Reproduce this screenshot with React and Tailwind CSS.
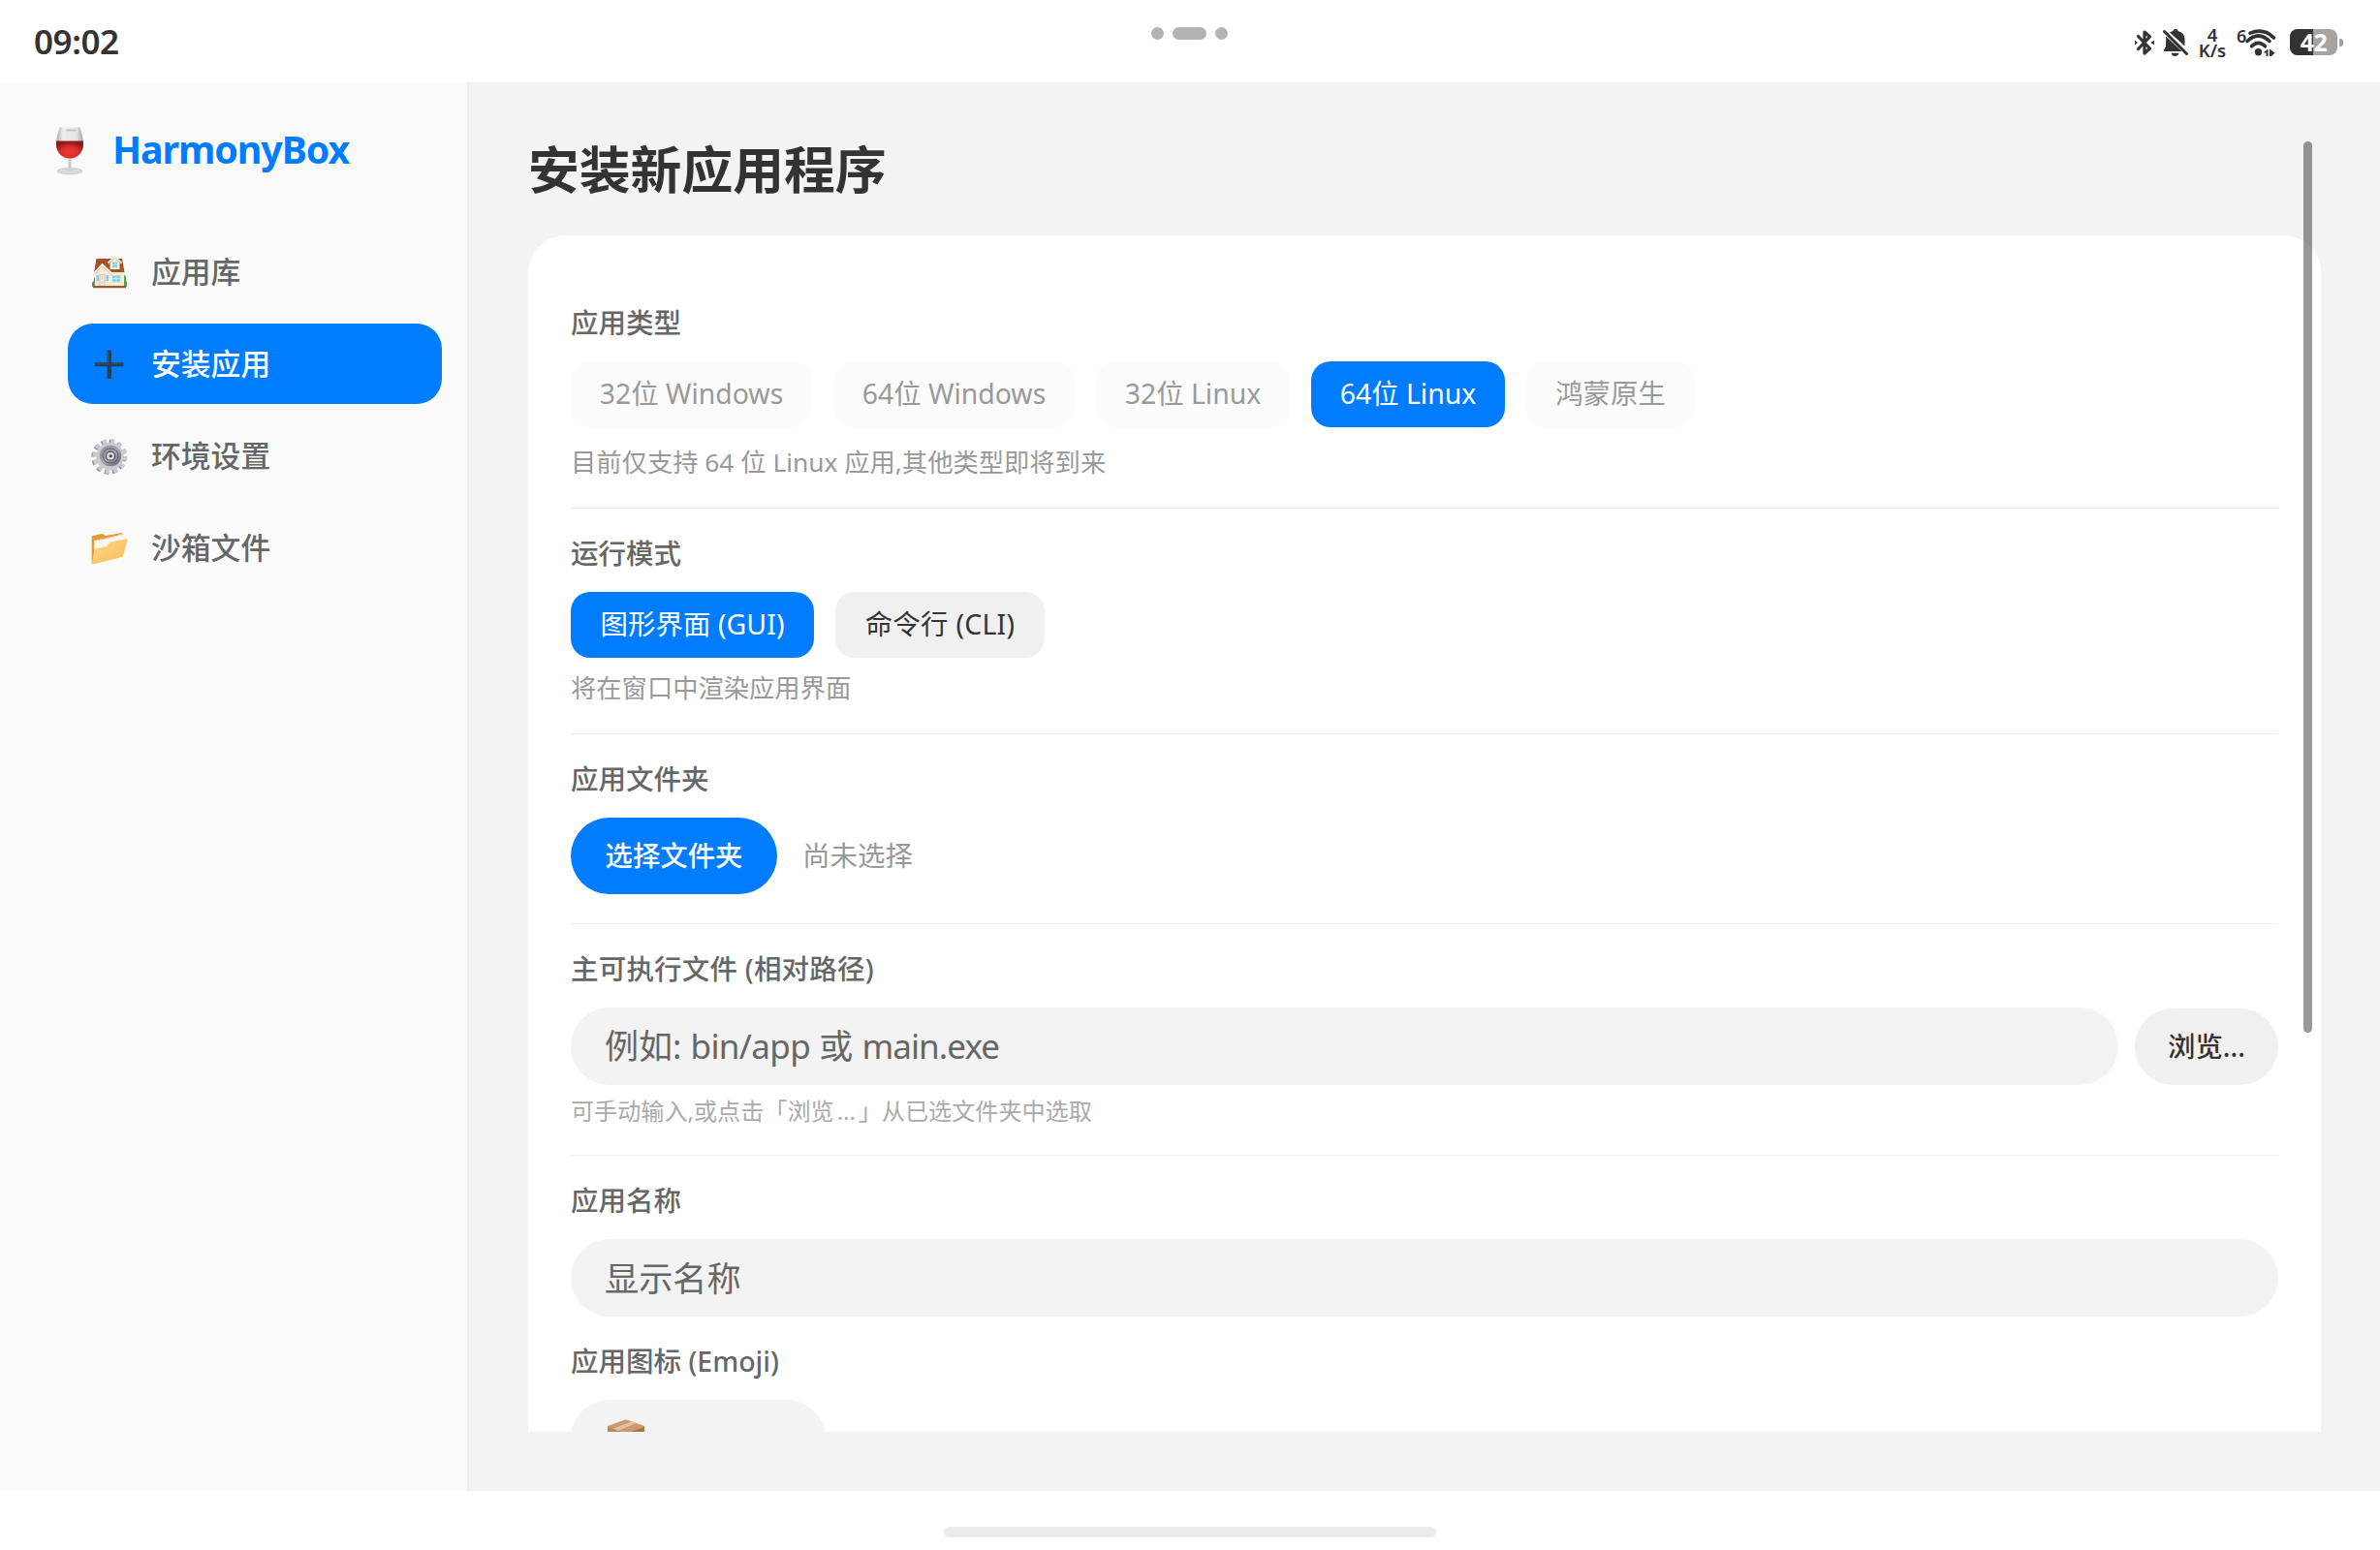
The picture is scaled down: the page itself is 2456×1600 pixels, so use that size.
import React from 'react';

const NAV_ITEMS = [
  { id: 'library', label: '应用库', Icon: HouseIcon },
  { id: 'install', label: '安装应用', Icon: PlusIcon },
  { id: 'env', label: '环境设置', Icon: GearIcon },
  { id: 'sandbox', label: '沙箱文件', Icon: FolderIcon },
];

const APP_TYPES = [
  { label: '32位 Windows', width: 'w-[249px]' },
  { label: '64位 Windows', width: 'w-[249px]' },
  { label: '32位 Linux', width: 'w-[200px]' },
  { label: '64位 Linux', width: 'w-[200px]', active: true },
  { label: '鸿蒙原生', width: 'w-[174px]' },
];

function WineIcon() {
  return (
    <svg width="30" height="50" viewBox="0 0 30 50">
      <defs>
        <linearGradient id="glass" x1="0" x2="1" y1="0" y2="0">
          <stop offset="0" stopColor="#a9a9a9" />
          <stop offset="0.25" stopColor="#ececec" />
          <stop offset="0.75" stopColor="#e4e4e4" />
          <stop offset="1" stopColor="#a2a2a2" />
        </linearGradient>
        <radialGradient id="wine" cx="0.5" cy="0.65" r="0.6">
          <stop offset="0" stopColor="#f23a35" />
          <stop offset="0.5" stopColor="#dc302c" />
          <stop offset="1" stopColor="#8d1a1c" />
        </radialGradient>
      </defs>
      <ellipse cx="15" cy="45.6" rx="13" ry="3" fill="#dcdcdc" stroke="#bdbdbd" strokeWidth="0.7" />
      <path d="M13 32h4l-.6 10.5c0 1 2.2 2 4.6 2.6H9c2.4-.6 4.6-1.6 4.6-2.6z" fill="#cfcfcf" />
      <path d="M4.500.6h21C27.500 6 29 12.500 29 18c0 8.500-6.500 15-14 15S1 26.500 1 18C1 12.500 2.500 6 4.500.6z" fill="url(#glass)" />
      <path d="M1.200 14.500h27.600c.2 1.200.2 2.300.2 3.500 0 8.500-6.500 14.600-14 14.600S1 26.500 1 18c0-1.200 0-2.300.2-3.500z" fill="url(#wine)" />
      <rect x="11" y="2.500" width="11" height="2" rx="1" fill="#c4c4c4" />
    </svg>
  );
}

function HouseIcon() {
  return (
    <svg width="38" height="38" viewBox="0 0 38 38">
      <path d="M1 31c0-2 1-3 2-3-1-3 2-5 4-4v10H1zM37 31c0-2-.5-3-1-3 1-4-1-7-4-7v13h5z" fill="#5d9a4a" />
      <path d="M4 19 11 11l8 5h15v17H4z" fill="#f3ebd0" />
      <path d="M5.500 5H32l2.500 14H19l-7.500-7.500L3 19z" fill="#a3512c" />
      <path d="M3 20.500 11.500 11l9.500 9.500v12.500H4V20z" fill="#f3ebd0" />
      <path d="M2.500 20.500 11.500 11l10 9.500" fill="none" stroke="#fffbee" strokeWidth="1.8" />
      <path d="M2.500 22 11.500 12.600l10 9.400" fill="none" stroke="#b5a684" strokeWidth="0.6" />
      <path d="M19.500 9 24.500 4l5 5v7h-10z" fill="#f6efd8" />
      <path d="M17.500 9.500 24.500 3.200l7 6.300" fill="none" stroke="#f4eedb" strokeWidth="1.9" />
      <path d="M17.500 10.500 24.500 4.500l7 6" fill="none" stroke="#b7a98b" strokeWidth="0.5" />
      <path d="M22 8.500h5V14h-5zM22 22.500h8v6.500h-8zM5.500 22H8v6H5.500zM15.500 22H18v6h-2.500z" fill="#79d3ee" />
      <path d="M22 11h5M26 22.500V29M22 25.500h8" stroke="#e9f7fa" strokeWidth="0.6" />
      <path d="M9 21.500h5V33H9z" fill="#f5f1ea" stroke="#c3b8ab" strokeWidth="0.8" />
      <path d="M10.500 23.500h2v3h-2zM10.500 28h2v3h-2z" fill="#d6d0ca" />
      <path d="M2 33h34v2.200H2z" fill="#9a5a37" />
    </svg>
  );
}

function PlusIcon() {
  return (
    <svg width="38" height="38" viewBox="0 0 38 38">
      <path d="M17.500 4.500h2.500q1 0 1 1V17h11.500q1 0 1 1v2.200q0 1-1 1H21V33q0 1-1 1h-2.500q-1 0-1-1V21.200H5q-1 0-1-1V18q0-1 1-1h11.500V5.500q0-1 1-1z" fill="#23405f" />
      <path d="M17.500 6v12h-12M21 18h11" fill="none" stroke="#41607f" strokeWidth="0.8" />
    </svg>
  );
}

function GearIcon() {
  return (
    <svg width="38" height="38" viewBox="0 0 38 38">
      <defs>
        <linearGradient id="disc" x1="0" x2="1" y1="0" y2="1">
          <stop offset="0" stopColor="#8c8c97" />
          <stop offset="0.5" stopColor="#a5a5af" />
          <stop offset="1" stopColor="#62626e" />
        </linearGradient>
      </defs>
      <circle cx="19" cy="19" r="15.8" fill="none" stroke="#8e8e96" strokeWidth="4.4" strokeDasharray="4.3 3.974" transform="translate(-0.8 0.8)" />
      <circle cx="19.5" cy="19" r="15.8" fill="none" stroke="#c9c9ce" strokeWidth="4.4" strokeDasharray="4.3 3.974" />
      <circle cx="19.5" cy="19" r="14.2" fill="#c9c9ce" />
      <ellipse cx="20" cy="18.5" rx="11.2" ry="10.8" fill="url(#disc)" />
      <ellipse cx="20" cy="18.5" rx="8" ry="7.7" fill="none" stroke="#5d5d6b" strokeWidth="1" />
      <circle cx="20" cy="18.7" r="4.5" fill="#dadade" stroke="#4f4f5c" strokeWidth="1.2" />
      <circle cx="20.2" cy="18.7" r="1.5" fill="#3f3f4a" />
    </svg>
  );
}

function FolderIcon() {
  return (
    <svg width="38" height="38" viewBox="0 0 38 38">
      <defs>
        <linearGradient id="folder" x1="0" x2="1" y1="0" y2="1">
          <stop offset="0" stopColor="#ffd887" />
          <stop offset="1" stopColor="#f7bd58" />
        </linearGradient>
      </defs>
      <path d="M.6 7.500Q.6 6.300 2 6l9-2q1.500-.3 2.300.8L14.500 6 32 3v10L1.500 35q-.9 0-.9-1z" fill="#e69a35" />
      <path d="M3 11 13 9.500 33.500 4l3.500 6L30 20 3 27z" fill="#fdf6ee" />
      <path d="M3 11 13 9.500 33.500 4.500" fill="none" stroke="#e4cfc0" strokeWidth="0.7" />
      <path d="M4.500 19.500 15 17q1.500-.4 2.500-1.800l1.200-1.600q.8-1.100 2.300-1.400l15.300-3q1.500-.2 1.200 1.300l-4.300 16q-.3 1.200-1.500 1.500L2 35.500q-1.200.2-1-1L3.300 21q.2-1.200 1.200-1.500z" fill="url(#folder)" />
    </svg>
  );
}

function BoxIcon() {
  return (
    <svg width="40" height="40" viewBox="0 0 40 40">
      <path d="M1 7.500 20 14v25L3 31.500q-2-1-2-3z" fill="#b98858" />
      <path d="M39 7.500 20 14v25l17-7.500q2-1 2-3z" fill="#a87546" />
      <path d="M1 7 18.500.8q1.500-.5 3 0L39 7v1L20 14.500 1 8z" fill="#cb9b6f" />
      <path d="M7 9.800 26 2.300l4.500 1.600L12 12z" fill="#dfc0a0" />
    </svg>
  );
}

function StatusIcons() {
  return (
    <div className="flex items-center text-[#333]">
      <svg width="20" height="28" viewBox="0 0 20 28">
        <path d="M3.500 7.500 15.500 20 10 25V3l5.500 5L3.500 20.500" fill="none" stroke="currentColor" strokeWidth="3.2" strokeLinejoin="round" strokeLinecap="round" />
        <path d="M0 11.500 3 14l-3 2.500zM20 11.500 16.500 14l3.500 2.500z" fill="currentColor" />
      </svg>
      <svg className="ml-[9px]" width="26" height="30" viewBox="0 0 26 30">
        <path d="M7 4.500Q9 3 10.500 3q0-2 2.500-2t2.500 2q7 1.500 7 9v6.500zM3.200 8.500 19.500 24H2q-1.500 0-1-1.500l2-3.500z" fill="currentColor" />
        <path d="M8.500 25.800h8q-1 3.200-4 3.200t-4-3.200z" fill="currentColor" />
        <path d="m1.500 3.500 23 23" stroke="currentColor" strokeWidth="3" strokeLinecap="round" />
      </svg>
      <p className="ml-[10px] w-[30px] whitespace-pre-line text-center text-[18.5px] font-semibold leading-[15.5px]">{'4\nK/s'}</p>
      <svg className="ml-[11px] overflow-visible" width="40" height="30" viewBox="0 0 40 30">
        <text x="-1" y="14.5" fontSize="18" fontWeight="600" fill="currentColor">6</text>
        <g fill="none" stroke="currentColor" strokeWidth="3.6" strokeLinecap="round">
          <path d="M13 5.200Q27-.5 37.500 10" />
          <path d="M10 13.500Q21.500 2.500 33 13.500" />
          <path d="M14.500 18.800Q21.500 12 28.500 18.800" />
        </g>
        <circle cx="21.5" cy="24.8" r="3.7" fill="currentColor" />
        <path d="m26.500 25.500 5-4V29h-2v-3.500zM33 21.500l5.500 4-3.500 3.500h-2z" fill="currentColor" />
      </svg>
      <div className="relative ml-[14px] flex h-[27px] w-[49px] items-center justify-center rounded-[8px] bg-[#a3a3a3]">
        <div className="absolute inset-y-0 left-0 w-[24px] rounded-l-[8px] bg-[#333]" />
        <span className="relative text-[25px] font-bold leading-[27px] tracking-[-0.5px] text-white">42</span>
      </div>
      <div className="ml-[2px] h-[8px] w-[4px] rounded-r-[3px] bg-[#a3a3a3]" />
    </div>
  );
}

function StatusBar() {
  return (
    <header className="flex h-[85px] items-start justify-between bg-white pl-[35px] pr-[38px]">
      <p className="w-[420px] pt-[23px] text-[35px] font-semibold leading-[40px] tracking-[-0.4px] text-[#333]">09:02</p>
      <div className="flex items-center gap-[9px] pl-[2px] pt-[28px]">
        <span className="size-[13px] rounded-full bg-[#b2b3b7]" />
        <span className="h-[13px] w-[35px] rounded-full bg-[#b2b3b7]" />
        <span className="size-[13px] rounded-full bg-[#b2b3b7]" />
      </div>
      <div className="flex w-[420px] justify-end pt-[28px]">
        <StatusIcons />
      </div>
    </header>
  );
}

function Sidebar({ active }) {
  return (
    <aside className="w-[484px] shrink-0 border-r-2 border-[#ebecee] bg-[#fafafa]">
      <div className="flex items-start pl-[57px] pt-[46px]">
        <WineIcon />
        <h1 className="-mt-[2px] ml-[29px] text-[39.4px] font-bold leading-[50px] tracking-[-1.1px] text-[#007dff]">HarmonyBox</h1>
      </div>
      <nav className="mt-[58px] flex flex-col gap-[12px] pl-[70px] pr-[26px]">
        {NAV_ITEMS.map(({ id, label, Icon }) => (
          <button
            key={id}
            className={`flex h-[83px] w-full items-center gap-[24px] rounded-[26px] pl-[24px] text-[30.8px] font-medium ${
              id === active ? 'bg-[#007dff] text-white' : 'text-[#666]'
            }`}
          >
            <Icon />
            <span className="-mt-px">{label}</span>
          </button>
        ))}
      </nav>
    </aside>
  );
}

function Label({ children, className = '' }) {
  return <p className={`h-[40px] text-[28.5px] font-medium leading-[40px] text-[#666] ${className}`}>{children}</p>;
}

function Divider({ className = '' }) {
  return <div className={`h-px bg-[#eee] ${className}`} />;
}

function Chip({ label, width, tone }) {
  return (
    <button className={`flex h-[68px] items-center justify-center rounded-[20px] pb-[2px] text-[28.4px] leading-[40px] ${width} ${tone}`}>
      {label}
    </button>
  );
}

function InstallForm() {
  return (
    <section className="h-[1235px] overflow-hidden rounded-t-[38px] bg-white px-[44px] pt-[70px]">
      <Label>应用类型</Label>
      <div className="mt-[20px] flex gap-[22px]">
        {APP_TYPES.map(type => (
          <Chip
            key={type.label}
            label={type.label}
            width={type.width}
            tone={type.active ? 'bg-[#007dff] text-white' : 'bg-[#fcfcfc] text-[#999]'}
          />
        ))}
      </div>
      <p className="mt-[20px] h-[32px] text-[26.3px] leading-[32px] text-[#999]">目前仅支持 64 位 Linux 应用,其他类型即将到来</p>
      <Divider className="mt-[31px]" />

      <Label className="mt-[26px]">运行模式</Label>
      <div className="mt-[20px] flex gap-[22px]">
        <Chip label="图形界面 (GUI)" width="w-[251px]" tone="bg-[#007dff] text-white tracking-[0.1px]" />
        <Chip label="命令行 (CLI)" width="w-[216px]" tone="bg-[#f0f0f0] text-[#333] tracking-[0.3px]" />
      </div>
      <p className="mt-[15px] h-[32px] text-[26.3px] leading-[32px] text-[#999]">将在窗口中渲染应用界面</p>
      <Divider className="mt-[31px]" />

      <Label className="mt-[26px]">应用文件夹</Label>
      <div className="mt-[20px] flex items-center gap-[26px]">
        <button className="h-[79px] w-[213px] rounded-full bg-[#007dff] text-[28.4px] font-medium text-white">选择文件夹</button>
        <span className="text-[28.5px] text-[#999]">尚未选择</span>
      </div>
      <Divider className="mt-[30px]" />

      <Label className="mt-[26px] tracking-[0.2px]">主可执行文件 (相对路径)</Label>
      <div className="mt-[20px] flex items-end gap-[17px]">
        <div className="flex h-[80px] flex-1 items-center whitespace-pre rounded-full bg-[#f3f3f3] pl-[35px] text-[35px] text-[#666]">
          <span>例如: <span className="tracking-[-0.6px]">bin/app</span> 或 <span className="tracking-[-0.9px]">main.exe</span></span>
        </div>
        <button className="h-[79px] w-[148px] rounded-full bg-[#f0f0f0] text-[28.4px] font-medium text-[#333]">浏览...</button>
      </div>
      <p className="mt-[11px] h-[32px] text-[24.12px] leading-[32px] text-[#aaa]">
        可手动输入,或点击「浏览<span className="px-[3px]">…</span>」从已选文件夹中选取
      </p>
      <Divider className="mt-[29px]" />

      <Label className="mt-[26px]">应用名称</Label>
      <div className="mt-[20px] flex h-[80px] items-center rounded-full bg-[#f3f3f3] pl-[35px] text-[35.2px] text-[#666]">显示名称</div>

      <Label className="mt-[26px]">应用图标 (Emoji)</Label>
      <div className="mt-[20px] flex h-[80px] w-[263px] items-center rounded-full bg-[#f3f3f3] pl-[37px]">
        <BoxIcon />
      </div>
    </section>
  );
}

export default function App() {
  return (
    <div className="flex h-[1600px] w-[2456px] flex-col overflow-hidden bg-white font-['Noto_Sans','Noto_Sans_CJK_SC',sans-serif]">
      <StatusBar />
      <div className="flex h-[1454px]">
        <Sidebar active="install" />
        <main className="relative flex-1 bg-[#f1f3f5] pl-[61px] pr-[61px] pt-[58px]">
          <h2 className="h-[100px] text-[52.8px] font-bold leading-[63px] text-[#333]">安装新应用程序</h2>
          <InstallForm />
          {/* Scroll thumb floats over the card edge */}
          <div className="absolute right-[70px] top-[61px] h-[920px] w-[9px] rounded-full bg-black/40" />
        </main>
      </div>
      <footer className="flex flex-1 justify-center pt-[37px]">
        <div className="h-[11px] w-[508px] rounded-full bg-[#ebebeb]" />
      </footer>
    </div>
  );
}
